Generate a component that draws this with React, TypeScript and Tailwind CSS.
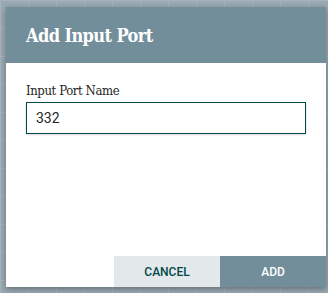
import React, { useState } from 'react';

export default function App() {
  const [name, setName] = useState("332");

  return (
    <div className="relative w-[328px] h-[293px] overflow-hidden bg-[#9aa9b2] bg-[linear-gradient(to_right,#a6b3bb_1px,transparent_1px),linear-gradient(to_bottom,#a6b3bb_1px,transparent_1px)] bg-[size:28px_28px] font-['Roboto',sans-serif]">
      <div className="absolute left-[6px] top-[7px] w-[320px] h-[280px] flex flex-col bg-white shadow-[0_2px_6px_rgba(0,0,0,0.35)]">
        <div className="h-[56px] shrink-0 bg-[#728e9b] px-5 flex items-center">
          <h1 className="text-white text-[18px] font-bold font-['DejaVu_Serif',serif] font-stretch-condensed tracking-[-0.6px]">Add Input Port</h1>
        </div>
        <div className="flex-1 px-5 pt-[19px]">
          <label className="block text-[13px] text-[#262626] font-['DejaVu_Serif',serif] font-stretch-condensed tracking-[-0.4px] leading-[18px] mb-[2px]">Input Port Name</label>
          <input
            value={name}
            onChange={(e) => setName(e.target.value)}
            className="w-[280px] h-[32px] border border-[#004849] px-[9px] text-[14px] text-[#262626] outline-none shadow-[0_1px_2px_rgba(0,0,0,0.15)]"
          />
        </div>
        <div className="flex justify-end h-[31px] shrink-0">
          <button className="w-[106px] bg-[#e3e8eb] text-[#004849] text-[12px] font-medium">CANCEL</button>
          <button className="w-[106px] bg-[#728e9b] text-white text-[12px] font-medium">ADD</button>
        </div>
      </div>
    </div>
  );
}
